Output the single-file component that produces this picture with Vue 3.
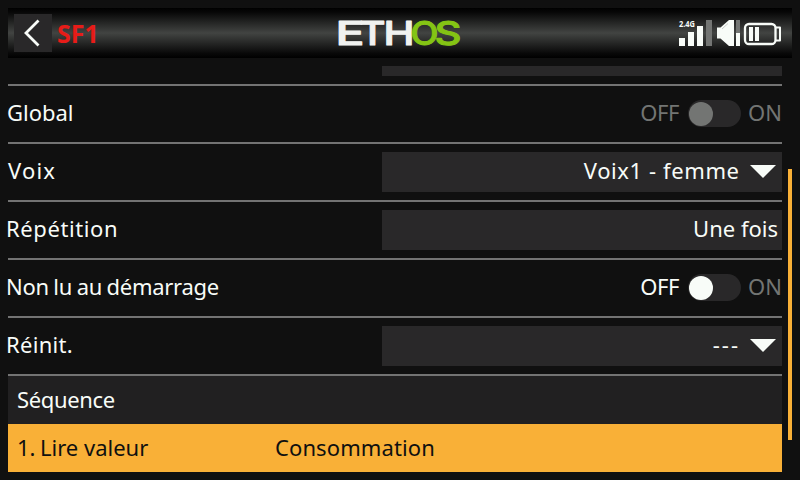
<script setup>
const rows = [
  { label: 'Global', kind: 'toggle', disabled: true, cls: 'global' },
  { label: 'Voix', kind: 'select', value: 'Voix1 - femme', cls: 'voix' },
  { label: 'Répétition', kind: 'field', value: 'Une fois', cls: 'repeat' },
  { label: 'Non lu au démarrage', kind: 'toggle', cls: 'startup' },
  { label: 'Réinit.', kind: 'select', value: '---', cls: 'reset' },
]
</script>

<template>
  <main class="screen">
    <header class="topbar">
      <button class="back" aria-label="Retour">
        <svg width="38" height="38" viewBox="0 0 38 38"><path d="M24.5 6.5 12 19 24.5 31.5" fill="none" stroke="#f8fcf8" stroke-width="2.8" /></svg>
      </button>
      <h1 class="title">SF1</h1>
      <svg class="logo" width="132" height="50" viewBox="-4 -10 132 50" aria-label="ETHOS">
        <g class="brand" fill="#f0f2f0" stroke="#f0f2f0">
          <text x="-1.5" y="27.3" textLength="29" lengthAdjust="spacingAndGlyphs">E</text>
          <text x="22.5" y="27.3" textLength="26" lengthAdjust="spacingAndGlyphs">T</text>
          <text x="46.5" y="27.3" textLength="31" lengthAdjust="spacingAndGlyphs">H</text>
        </g>
        <g class="brand" fill="#84c414" stroke="#84c414">
          <text x="73.5" y="27.1" textLength="28" lengthAdjust="spacingAndGlyphs">O</text>
          <text x="97.5" y="27.1" textLength="27" lengthAdjust="spacingAndGlyphs">S</text>
        </g>
      </svg>
      <svg class="status" width="106" height="30" viewBox="0 0 106 30">
        <text x="1" y="8.500" class="band" textLength="16" lengthAdjust="spacingAndGlyphs">2.4G</text>
        <g fill="#f8fcf8">
          <rect x="1" y="20" width="6" height="8" />
          <rect x="10" y="14" width="6" height="14" />
          <rect x="19" y="8" width="6" height="20" />
          <path d="M39 9.500h3.500L51 2h5v26h-5l-8.500-7.500H39z" />
          <rect x="58" y="15" width="4" height="13" />
          <rect x="71" y="9" width="4" height="14" />
          <rect x="77" y="9" width="4" height="14" />
        </g>
        <rect x="28" y="2" width="6" height="26" fill="#737573" />
        <rect x="58" y="2" width="4" height="13" fill="#737573" />
        <path d="M44 11 50 5.500" stroke="#b5b8b5" stroke-width=".7" />
        <path d="M98 9.500h4v13h-4" fill="none" stroke="#f8fcf8" stroke-width="2" stroke-linejoin="round" />
        <rect x="67" y="6" width="30.500" height="20" rx="4" fill="none" stroke="#f8fcf8" stroke-width="2.300" />
      </svg>
    </header>

    <section class="form">
      <div class="partial"><div class="stub"></div></div>
      <div v-for="row in rows" :key="row.label" class="row" :class="row.cls">
        <span class="label">{{ row.label }}</span>
        <div v-if="row.kind === 'toggle'" class="toggle" :class="{ disabled: row.disabled }">
          <span class="off">OFF</span>
          <span class="track"><i class="knob"></i></span>
          <span class="on">ON</span>
        </div>
        <div v-else class="box" :class="row.kind">
          <span class="value">{{ row.value }}</span>
          <svg v-if="row.kind === 'select'" class="arrow" width="26" height="13" viewBox="0 0 26 13"><path d="M0 0h26L13 13z" fill="#f8fcf8" /></svg>
        </div>
      </div>
      <div class="line heading"><span>Séquence</span></div>
      <div class="line selected">
        <span class="number">1.</span><span class="action">Lire valeur</span><span class="target">Consommation</span>
      </div>
    </section>
    <div class="scrollbar"></div>
  </main>
</template>

<style>
body { background: #101010; overflow: hidden; }
</style>

<style scoped>
.screen {
  box-sizing: border-box;
  width: 800px;
  height: 480px;
  padding: 8px;
  display: grid;
  grid-template-columns: 774px 4px;
  grid-template-rows: 50px 406px;
  column-gap: 6px;
  row-gap: 8px;
  background: #101010;
  color: #f8fcf8;
  font: 22px/30px "Noto Sans", sans-serif;
  overflow: hidden;
  white-space: nowrap;
}
.topbar {
  grid-column: 1 / 3;
  width: 784px;
  display: flex;
  align-items: center;
  background: linear-gradient(#000 0%, #080808 9%, #424442 50%, #080808 91%, #000 100%);
}
.back {
  margin: 0 0 0 6px;
  padding: 0;
  width: 38px;
  height: 38px;
  border: 0;
  background: #292829;
}
.back svg { display: block; }
.title {
  margin: 0 0 0 5px;
  width: 44px;
  font-size: 25px;
  line-height: 32px;
  padding-bottom: 1px;
  font-weight: 700;
  letter-spacing: 0;
  color: #e71c18;
}
.logo { margin-left: 232px; flex: none; }
.brand { font: 500 33px Inter, sans-serif; stroke-width: 1px; stroke-linejoin: round; }
.status { margin-left: 213px; flex: none; }
.band { font: 700 8.5px "Noto Sans", sans-serif; fill: #f8fcf8; }
.form { display: flex; flex-direction: column; }
.partial {
  height: 20px;
  box-sizing: border-box;
  border-bottom: 2px solid #737373;
  display: flex;
  justify-content: flex-end;
}
.stub { width: 400px; height: 10px; background: #292829; }
.row {
  box-sizing: border-box;
  height: 58px;
  border-bottom: 2px solid #737373;
  display: flex;
  align-items: center;
  justify-content: space-between;
}
.label { margin-left: -2px; padding-bottom: 4px; }
.global .label { margin-left: -1px; }
.voix .label { margin-left: 0; letter-spacing: 1.2px; }
.repeat .label { letter-spacing: .6px; }
.startup .label { letter-spacing: -.3px; word-spacing: -.8px; }
.reset .label { letter-spacing: .3px; }
.box {
  box-sizing: border-box;
  width: 400px;
  height: 40px;
  background: #292829;
  display: flex;
  align-items: center;
  justify-content: flex-end;
  padding-right: 4px;
}
.value { padding-bottom: 4px; }
.voix .value { letter-spacing: .6px; margin-right: -.6px; }
.reset .value { letter-spacing: 2px; margin-right: -1px; }
.box.select { padding-right: 6px; gap: 11px; }
.arrow { margin-top: -1px; }
.toggle { display: flex; align-items: center; color: #737573; }
.off, .on { padding-bottom: 4px; }
.off { color: #f8fcf8; letter-spacing: -.4px; }
.disabled .off { color: #737573; }
.track {
  box-sizing: border-box;
  width: 53px;
  height: 27px;
  margin: 0 7px 0 9px;
  padding: 2px 1px;
  border-radius: 14px;
  background: #292829;
}
.toggle .track { margin-top: -1px; }
.knob { display: block; width: 24px; height: 24px; border-radius: 50%; background: #f8fcf8; }
.disabled .knob { background: #737573; }
.line { height: 48px; display: flex; align-items: center; }
.line span { padding-bottom: 2px; }
.heading { background: #212021; padding-left: 9px; letter-spacing: -.35px; }
.selected { background: #f9b037; color: #101010; padding-left: 9px; }
.number { width: 23px; }
.action { width: 235px; }
.target { letter-spacing: .1px; }
.scrollbar { margin-top: 103px; height: 271px; background: #f9b037; }
</style>
